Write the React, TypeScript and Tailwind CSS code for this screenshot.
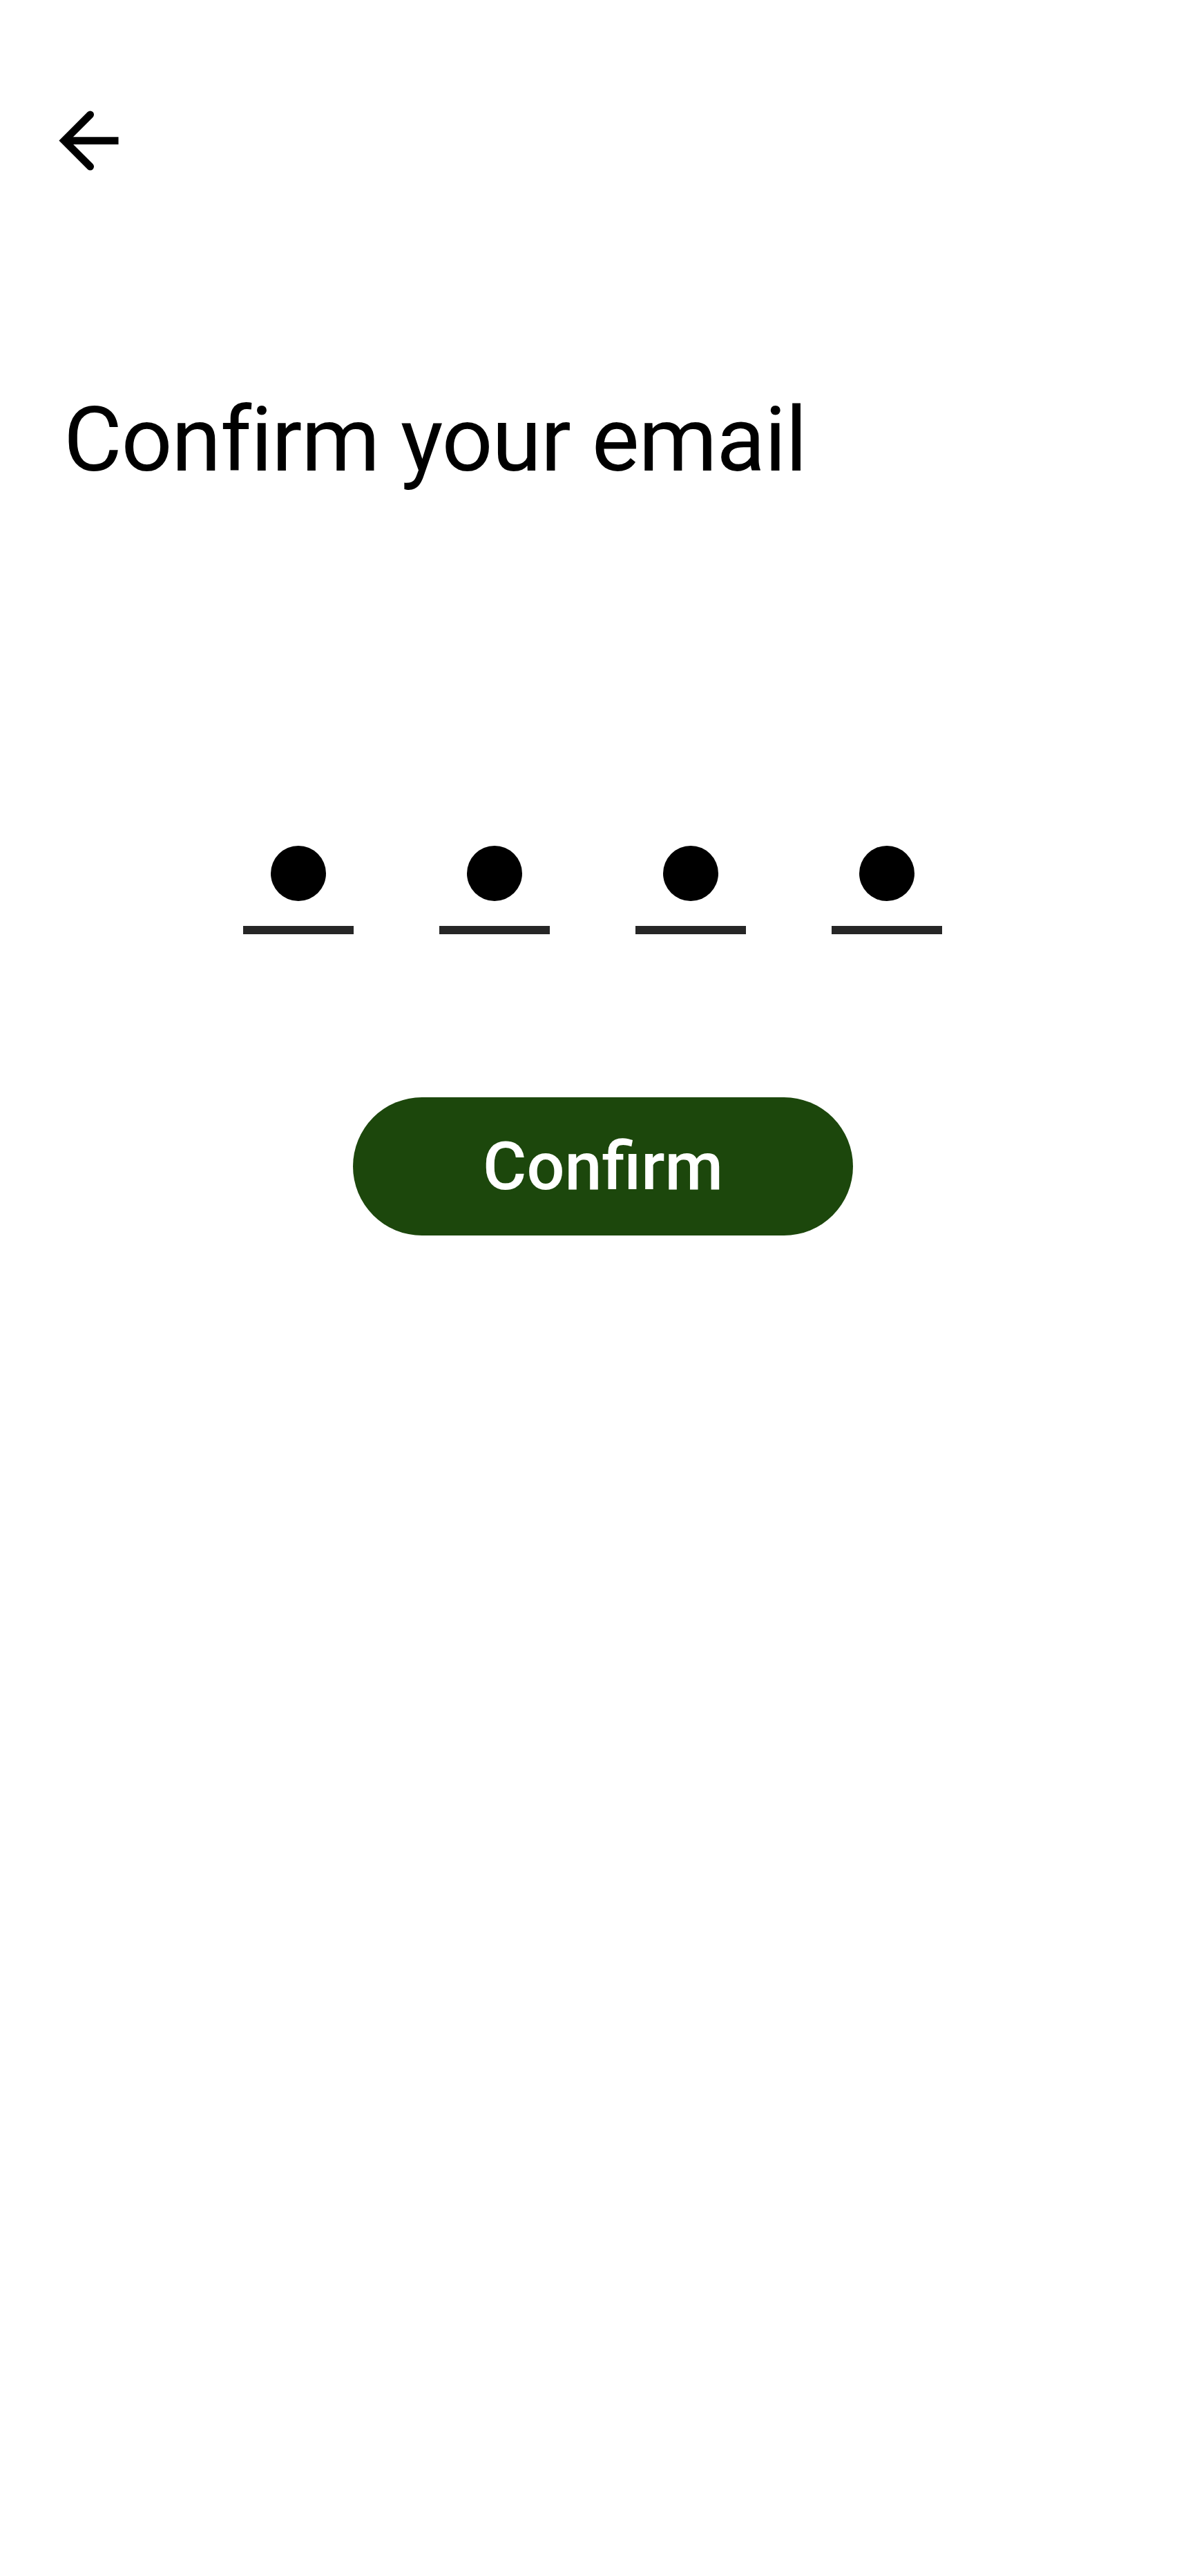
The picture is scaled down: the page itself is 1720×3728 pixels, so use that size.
import React from "react";

// Confirm email screen: back arrow, title, 4 masked code slots and a confirm pill

function BackArrow() {
  return (
    <svg viewBox="0 0 24 24" className="w-[129px] h-[129px]" fill="none" stroke="#000">
      <path d="M12.4 5 L5.4 12 L12.4 19" strokeWidth="2" strokeLinecap="round" strokeLinejoin="miter" />
      <path d="M5.6 12 H20" strokeWidth="2" strokeLinecap="butt" />
    </svg>
  );
}

function CodeSlot() {
  return (
    <div className="w-[160px] flex flex-col items-center">
      <div className="w-[80px] h-[80px] rounded-full bg-black" />
      <div className="mt-[36px] w-full h-[12px] bg-[#262626]" />
    </div>
  );
}

export default function App() {
  return (
    <div className="w-full min-h-[3728px] bg-white flex flex-col font-['Roboto',sans-serif] text-black">
      <div className="pt-[139px] pl-[64px]">
        <BackArrow />
      </div>

      <h1 className="mt-[292px] pl-[92px] text-[130px] leading-[154px] tracking-[-1.2px] font-normal">Confirm your email</h1>

      <div className="mt-[510px] pl-[352px] flex gap-[124px]">
        <CodeSlot />
        <CodeSlot />
        <CodeSlot />
        <CodeSlot />
      </div>

      <button className="mt-[236px] ml-[511px] w-[724px] h-[200px] rounded-full bg-[#1c470c] flex items-center justify-center">
        <span className="text-white text-[97px] leading-none font-medium">Confirm</span>
      </button>
    </div>
  );
}
